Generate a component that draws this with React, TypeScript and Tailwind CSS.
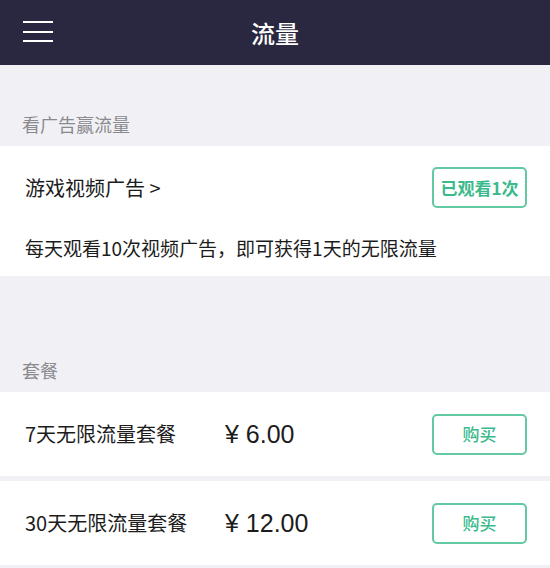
import React from "react";

const font = { fontFamily: '"Noto Sans CJK SC", "Noto Sans", sans-serif' };

function Row({ name, price }: { name: string; price: string }) {
  return (
    <div className="flex h-[84px] items-center bg-white pl-[25px] pr-[23px]">
      <div className="w-[200px] text-[20px] leading-[28px] text-[#1c1c1c]">{name}</div>
      <div
        className="flex-1 whitespace-pre text-[25px] leading-[30px] text-[#1c1c1c]"
        style={{ fontFamily: '"Liberation Sans", "Noto Sans CJK SC", sans-serif' }}
      >
        {price}
      </div>
      <button className="flex h-[41px] w-[95px] items-center justify-center rounded-[5px] border-2 border-[#62c9a3] text-[17px] font-medium text-[#3cba8c]">
        购买
      </button>
    </div>
  );
}

export default function App() {
  return (
    <div className="min-h-[568px] w-[550px] bg-[#f1f1f5]" style={font}>
      <div className="relative flex h-[65px] items-center justify-center bg-[#2a2840]">
        <div className="absolute left-[23px] top-[21px] flex w-[30px] flex-col gap-[7.5px]">
          <div className="h-[2px] bg-white" />
          <div className="h-[2px] bg-white" />
          <div className="h-[2px] bg-white" />
        </div>
        <div className="text-[24px] font-medium text-white">流量</div>
      </div>

      <div className="flex h-[81px] items-end pb-[10px] pl-[22px] text-[18px] leading-[24px] text-[#8a8a8e]">
        看广告赢流量
      </div>

      <div className="bg-white px-[25px] pt-[21px] pb-[15px] pr-[23px]">
        <div className="flex h-[41px] items-center justify-between">
          <div className="text-[20px] leading-[28px] text-[#1c1c1c]">游戏视频广告 &gt;</div>
          <button className="flex h-[41px] w-[95px] items-center justify-center rounded-[5px] border-2 border-[#62c9a3] text-[17px] font-bold text-[#3cba8c]">
            已观看1次
          </button>
        </div>
        <div className="mt-[26px] text-[19px] leading-[27px] text-[#1c1c1c]">
          每天观看10次视频广告，即可获得1天的无限流量
        </div>
      </div>

      <div className="flex h-[116px] items-end pb-[10px] pl-[22px] text-[18px] leading-[24px] text-[#8a8a8e]">
        套餐
      </div>

      <Row name="7天无限流量套餐" price="¥ 6.00" />
      <div className="h-[5px]" />
      <Row name="30天无限流量套餐" price="¥ 12.00" />
    </div>
  );
}
